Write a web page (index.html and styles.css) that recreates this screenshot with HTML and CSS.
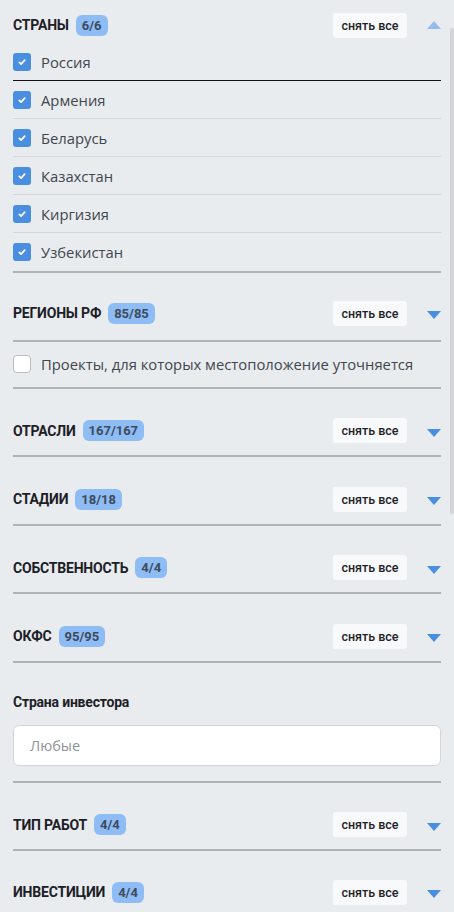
FILE: index.html
```html
<!DOCTYPE html>
<html lang="ru">
<head>
<meta charset="utf-8">
<link rel="stylesheet" href="styles.css">
</head>
<body>
<div class="panel">
  <section class="sec sec-first">
    <div class="head">
      <span class="title">СТРАНЫ</span><span class="badge">6/6</span>
      <button class="clear">снять все</button>
      <span class="tri tri-up"></span>
    </div>
    <ul class="list">
      <li class="item item-focus"><span class="cb on"><svg viewBox="0 0 18 18"><path d="M6.3 9.3l1.8 1.8 3.6-3.9" /></svg></span>Россия</li>
      <li class="item"><span class="cb on"><svg viewBox="0 0 18 18"><path d="M6.3 9.3l1.8 1.8 3.6-3.9" /></svg></span>Армения</li>
      <li class="item"><span class="cb on"><svg viewBox="0 0 18 18"><path d="M6.3 9.3l1.8 1.8 3.6-3.9" /></svg></span>Беларусь</li>
      <li class="item"><span class="cb on"><svg viewBox="0 0 18 18"><path d="M6.3 9.3l1.8 1.8 3.6-3.9" /></svg></span>Казахстан</li>
      <li class="item"><span class="cb on"><svg viewBox="0 0 18 18"><path d="M6.3 9.3l1.8 1.8 3.6-3.9" /></svg></span>Киргизия</li>
      <li class="item item-last"><span class="cb on"><svg viewBox="0 0 18 18"><path d="M6.3 9.3l1.8 1.8 3.6-3.9" /></svg></span>Узбекистан</li>
    </ul>
  </section>
  <section class="sec sec-regions">
    <div class="head">
      <span class="title">РЕГИОНЫ РФ</span><span class="badge">85/85</span>
      <button class="clear">снять все</button>
      <span class="tri"></span>
    </div>
  </section>
  <div class="extra">
    <span class="cb off"></span>Проекты, для которых местоположение уточняется
  </div>
  <section class="sec">
    <div class="head">
      <span class="title">ОТРАСЛИ</span><span class="badge">167/167</span>
      <button class="clear">снять все</button>
      <span class="tri"></span>
    </div>
  </section>
  <section class="sec">
    <div class="head">
      <span class="title">СТАДИИ</span><span class="badge">18/18</span>
      <button class="clear">снять все</button>
      <span class="tri"></span>
    </div>
  </section>
  <section class="sec">
    <div class="head">
      <span class="title">СОБСТВЕННОСТЬ</span><span class="badge">4/4</span>
      <button class="clear">снять все</button>
      <span class="tri"></span>
    </div>
  </section>
  <section class="sec">
    <div class="head">
      <span class="title">ОКФС</span><span class="badge">95/95</span>
      <button class="clear">снять все</button>
      <span class="tri"></span>
    </div>
  </section>
  <section class="investor">
    <div class="label">Страна инвестора</div>
    <div class="input">Любые</div>
  </section>
  <section class="sec">
    <div class="head">
      <span class="title">ТИП РАБОТ</span><span class="badge">4/4</span>
      <button class="clear">снять все</button>
      <span class="tri"></span>
    </div>
  </section>
  <section class="sec sec-open">
    <div class="head">
      <span class="title">ИНВЕСТИЦИИ</span><span class="badge">4/4</span>
      <button class="clear">снять все</button>
      <span class="tri"></span>
    </div>
  </section>
</div>
<div class="scrollbar"></div>
</body>
</html>
```
FILE: styles.css
```css
* { box-sizing: border-box; }
html, body {
  margin: 0;
  padding: 0;
  background: #e9ecef;
  height: 912px;
  overflow: hidden;
}
body {
  font-family: "Open Sans", "Noto Sans", sans-serif;
  color: #343a40;
}
.panel {
  padding: 0 13px;
}
.sec {
  padding: 29px 0 11.5px;
  border-bottom: 2px solid #b1b4b7;
}
.sec-first {
  padding-top: 12px;
  padding-bottom: 0;
  border-bottom: none;
}
.sec-regions {
  padding-top: 27px;
  padding-bottom: 13.5px;
}
.sec-open {
  padding-top: 28px;
  border-bottom: none;
}
.head {
  display: flex;
  align-items: center;
  height: 26px;
}
.title {
  font-family: Roboto, sans-serif;
  font-weight: 700;
  font-size: 14px;
  letter-spacing: -0.2px;
  color: #1c2026;
}
.badge {
  margin-left: 7px;
  background: #8ebcf5;
  color: #3d4b5c;
  font-family: Roboto, sans-serif;
  font-weight: 700;
  font-size: 13px;
  line-height: 21px;
  height: 21px;
  padding: 0 6px;
  border-radius: 6px;
}
.clear {
  margin-left: auto;
  border: none;
  background: #f8f9fa;
  border-radius: 3px;
  height: 25px;
  width: 74px;
  padding: 0;
  font-family: Roboto, sans-serif;
  font-size: 12.5px;
  font-weight: 500;
  color: #1f2329;
}
.tri {
  margin-left: 20px;
  width: 0;
  height: 0;
  border-left: 7px solid transparent;
  border-right: 7px solid transparent;
  border-top: 8px solid #4a8ee0;
  margin-top: 4px;
}
.tri-up {
  border-top: none;
  border-bottom: 8px solid #95bdec;
  margin-top: 0;
}
.list {
  list-style: none;
  margin: 5px 0 0;
  padding: 0;
}
.item {
  display: flex;
  align-items: center;
  height: 38px;
  border-bottom: 1px solid #d5d8db;
  font-size: 14.8px;
  color: #3f464d;
}
.item-focus {
  border-bottom: 1.5px solid #111;
}
.item-last {
  height: 40px;
  border-bottom: 2px solid #b1b4b7;
}
.cb {
  width: 18px;
  height: 18px;
  border-radius: 3px;
  margin-right: 10px;
  flex: none;
  display: flex;
}
.cb.on {
  background: #4a8ee0;
}
.cb svg {
  width: 18px;
  height: 18px;
  fill: none;
  stroke: #fff;
  stroke-width: 1.7;
  stroke-linecap: round;
  stroke-linejoin: round;
}
.cb.off {
  background: #fff;
  border: 1px solid #b9bcbf;
  border-radius: 4px;
}
.extra {
  display: flex;
  align-items: center;
  height: 47px;
  border-bottom: 2px solid #b1b4b7;
  font-size: 14.8px;
  color: #3f464d;
}
.investor {
  padding: 30px 0 15px;
  border-bottom: 2px solid #b1b4b7;
}
.label {
  font-family: Roboto, sans-serif;
  font-weight: 700;
  font-size: 14px;
  letter-spacing: -0.2px;
  color: #1c2026;
  line-height: 18px;
}
.input {
  margin-top: 14px;
  height: 41px;
  background: #fff;
  border: 1px solid #d3d6d9;
  border-radius: 6px;
  padding: 0 16px;
  display: flex;
  align-items: center;
  font-size: 14.5px;
  color: #8d9298;
}
.scrollbar {
  position: absolute;
  right: 0;
  top: 28px;
  width: 4px;
  height: 486px;
  background: #d3d5d8;
  border-radius: 2px;
}
```
